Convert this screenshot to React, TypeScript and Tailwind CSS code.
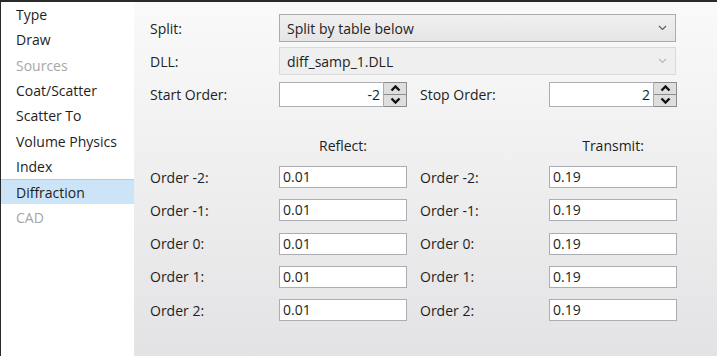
import React from "react";

const font = { fontFamily: '"Open Sans", "Noto Sans", sans-serif' };

function Chevron({ color = "#606060" }: { color?: string }) {
  return (
    <svg width="9" height="6" viewBox="0 0 9 6" className="block">
      <path d="M1 1 L4.5 4.5 L8 1" stroke={color} strokeWidth="1.2" fill="none" />
    </svg>
  );
}

function SpinBox({ value }: { value: string }) {
  return (
    <div className="flex h-[25px] w-[128px]">
      <div className="flex-1 bg-white border border-[#abadb3] flex items-center justify-end pr-[3px] text-[14px] text-[#1e1e1e] leading-none">
        {value}
      </div>
      <div className="w-[23px] flex flex-col border border-[#8c8c8c] border-l-0 bg-[#dedede]">
        <div className="flex-1 flex items-center justify-center border-b border-[#8c8c8c]">
          <svg width="11" height="7" viewBox="0 0 11 7">
            <path d="M1.5 5.5 L5.5 1.5 L9.5 5.5" stroke="#111" strokeWidth="2.4" fill="none" />
          </svg>
        </div>
        <div className="flex-1 flex items-center justify-center">
          <svg width="11" height="7" viewBox="0 0 11 7">
            <path d="M1.5 1.5 L5.5 5.5 L9.5 1.5" stroke="#111" strokeWidth="2.4" fill="none" />
          </svg>
        </div>
      </div>
    </div>
  );
}

function TextBox({ value }: { value: string }) {
  return (
    <div className="h-[22px] w-[128px] bg-white border border-[#abadb3] flex items-center pl-[3px] text-[14px] text-[#1e1e1e] leading-none">
      {value}
    </div>
  );
}

const sideItems: { label: string; disabled?: boolean; selected?: boolean }[] = [
  { label: "Type" },
  { label: "Draw" },
  { label: "Sources", disabled: true },
  { label: "Coat/Scatter" },
  { label: "Scatter To" },
  { label: "Volume Physics" },
  { label: "Index" },
  { label: "Diffraction", selected: true },
  { label: "CAD", disabled: true },
];

const orders = [
  { label: "Order -2:", r: "0.01", t: "0.19" },
  { label: "Order -1:", r: "0.01", t: "0.19" },
  { label: "Order 0:", r: "0.01", t: "0.19" },
  { label: "Order 1:", r: "0.01", t: "0.19" },
  { label: "Order 2:", r: "0.01", t: "0.19" },
];

export default function App() {
  return (
    <div
      className="w-[717px] h-[356px] flex border-t-2 border-l border-[#2a2a2a] overflow-hidden text-[14px] text-[#1e1e1e]"
      style={font}
    >
      <div className="w-[133px] bg-white flex flex-col">
        {sideItems.map((it) => (
          <div
            key={it.label}
            className={
              "h-[25.3px] flex items-center pl-[15px] " +
              (it.selected ? "bg-[#cce4f7] border-t border-[#a8cdee] " : "") +
              (it.disabled ? "text-[#a6a6a6]" : "text-[#1e1e1e]")
            }
          >
            {it.label}
          </div>
        ))}
      </div>
      <div className="flex-1 bg-gradient-to-b from-[#fafafa] to-[#e3e3e5] pl-[16px] pt-[12px] flex flex-col">
        <div className="flex items-center h-[28px]">
          <div className="w-[129px]">Split:</div>
          <div className="w-[397px] h-[28px] border border-[#acacac] bg-gradient-to-b from-[#f0f0f0] to-[#e5e5e5] flex items-center justify-between pl-[7px] pr-[8px]">
            <span>Split by table below</span>
            <Chevron />
          </div>
        </div>
        <div className="flex items-center h-[28px] mt-[5px]">
          <div className="w-[129px]">DLL:</div>
          <div className="w-[397px] h-[28px] border border-[#d9d9d9] bg-[#efefef] flex items-center justify-between pl-[7px] pr-[8px]">
            <span>diff_samp_1.DLL</span>
            <Chevron color="#b8b8b8" />
          </div>
        </div>
        <div className="flex items-center h-[25px] mt-[7px]">
          <div className="w-[129px]">Start Order:</div>
          <SpinBox value="-2" />
          <div className="w-[129px] ml-[13px]">Stop Order:</div>
          <SpinBox value="2" />
        </div>
        <div className="flex h-[20px] items-center mt-[28px]">
          <div className="w-[129px]" />
          <div className="w-[128px] text-center">Reflect:</div>
          <div className="w-[129px] ml-[13px]" />
          <div className="w-[128px] text-center">Transmit:</div>
        </div>
        <div className="flex flex-col gap-[11.25px] mt-[11px]">
          {orders.map((o) => (
            <div key={o.label} className="flex items-center h-[22px]">
              <div className="w-[129px]">{o.label}</div>
              <TextBox value={o.r} />
              <div className="w-[129px] ml-[13px]">{o.label}</div>
              <TextBox value={o.t} />
            </div>
          ))}
        </div>
      </div>
    </div>
  );
}
